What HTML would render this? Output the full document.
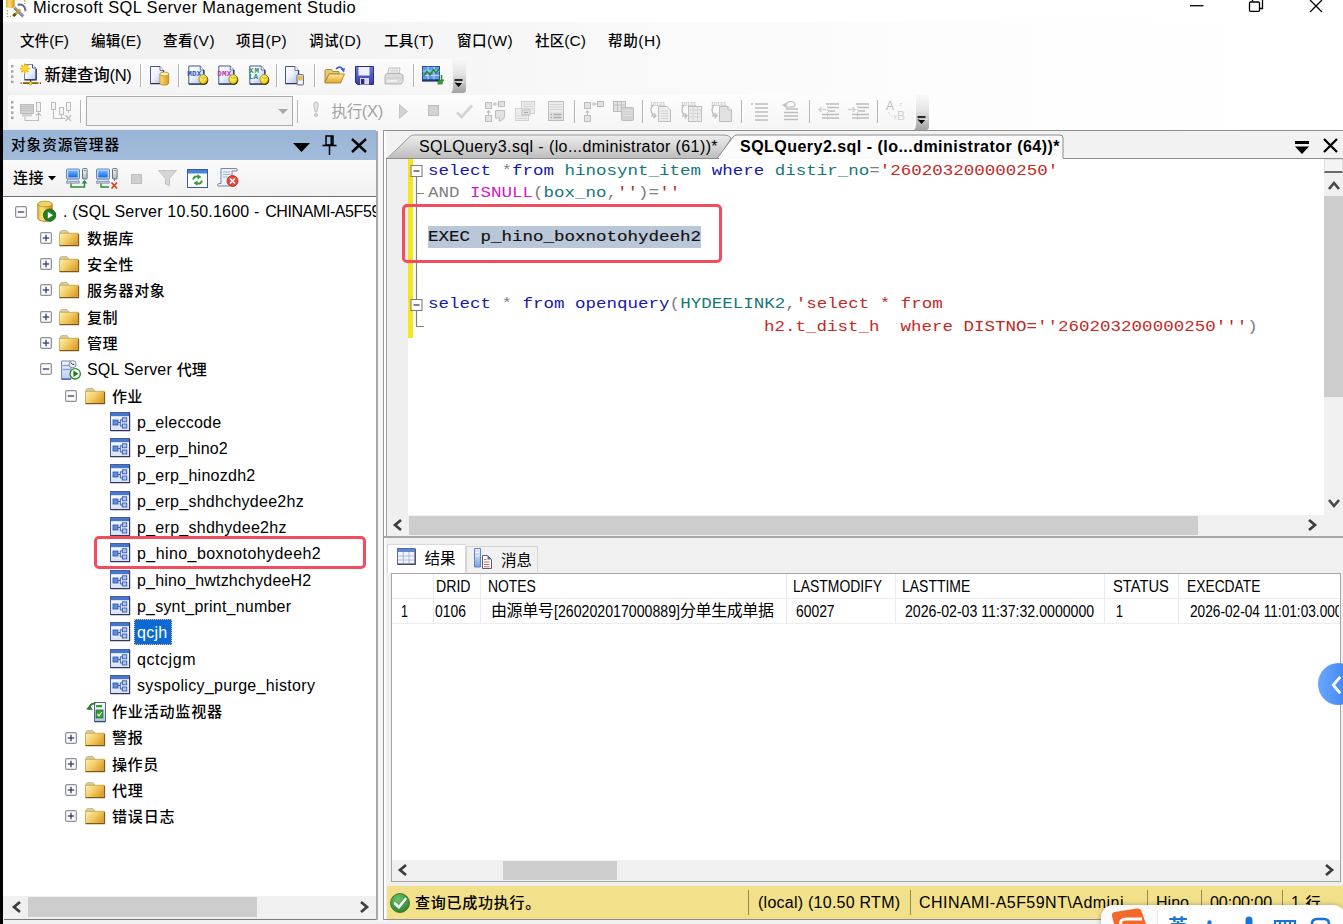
<!DOCTYPE html>
<html lang="zh-CN">
<head>
<meta charset="utf-8">
<title>Microsoft SQL Server Management Studio</title>
<style>
*{box-sizing:border-box;margin:0;padding:0}
html,body{width:1343px;height:924px;overflow:hidden;background:#f0f0f0}
body{position:relative;font-family:"Liberation Sans","Noto Sans CJK SC",sans-serif;color:#000;font-size:15px}
.abs{position:absolute}
.t{position:absolute;white-space:nowrap;line-height:1}
svg{position:absolute;overflow:visible}
.menu{font-size:15px;letter-spacing:-0.3px}
.row{font-size:16px;letter-spacing:-0.2px}
.code{font-family:"Liberation Mono",monospace;font-size:17.5px;white-space:pre}
.kw{color:#1616b0}.id{color:#157878}.fn{color:#d018c4}.st{color:#c4281e}.gr{color:#808080}.bk{color:#111;-webkit-text-stroke:.2px #111}
.grid{font-size:16.5px;transform-origin:0 50%;transform:scaleX(.86)}
.sb{font-size:16px;letter-spacing:-0.2px}
</style>
</head>
<body>
<div class="abs" style="left:0px;top:0px;width:1343px;height:22px;background:#ffffff;"></div>
<svg style="left:0px;top:0px" width="30" height="20" viewBox="0 0 30 20"><defs><linearGradient id="g1" x1="0" y1="0" x2="1" y2="0"><stop offset="0" stop-color="#e0a82a"/><stop offset=".35" stop-color="#fbe27c"/><stop offset="1" stop-color="#d8960e"/></linearGradient></defs><path d="M6 -2 V7 Q10.3 9.6 14.7 7 V-2 Z" fill="url(#g1)"/><path d="M7.4 10.2V16.4H11" stroke="#a8b030" stroke-width="1.3" stroke-dasharray="1.4 1.5" fill="none"/><path d="M24.7 0V4" stroke="#a8b030" stroke-width="1.2" stroke-dasharray="1.4 1.5"/><path d="M14.5 7.5L23.5 16.3" stroke="#8c9cb4" stroke-width="2.6"/><path d="M14.5 7.5L23.5 16.3" stroke="#39435c" stroke-width=".7" transform="translate(-.9,.9)"/><path d="M13.2 16L20.2 9.6" stroke="#c8a020" stroke-width="2.4"/><path d="M13.2 16L15.4 14" stroke="#5a4a10" stroke-width="2.6"/><path d="M17.6 4.8Q24.5 3.4 25.6 10.6" stroke="#5a6888" stroke-width="2" fill="none"/><path d="M23.8 9.4L26.8 9.4L25 12Z" fill="#7a88a8"/></svg>
<div class="t" style="left:33px;top:-1px;font-size:16.4px;letter-spacing:0.413px;font-weight:500;">Microsoft SQL Server Management Studio</div>
<svg style="left:1190px;top:0px" width="140" height="14" viewBox="0 0 140 14"><path d="M0 5.7H13.5" stroke="#000" stroke-width="1.3"/><rect x="59.5" y="2" width="10" height="9.3" rx="1" stroke="#000" stroke-width="1.3" fill="none"/><path d="M62.5 1.5V-1H72.5V8.5H70" stroke="#000" stroke-width="1.3" fill="none"/><path d="M120 0L132 12M132 0L120 12" stroke="#000" stroke-width="1.3"/></svg>
<div class="abs" style="left:0px;top:22px;width:1343px;height:109px;background:linear-gradient(90deg,#efefef 0,#f2f2f2 18%,#f8f8f8 42%,#fdfdfd 68%,#ffffff 100%);"></div>
<div class="t" style="left:20px;top:33px;font-size:15.5px;letter-spacing:0.013px;font-weight:500;"><span style="font-size:0.94em">文件</span>(F)</div>
<div class="t" style="left:91px;top:33px;font-size:15.5px;letter-spacing:0.138px;font-weight:500;"><span style="font-size:0.94em">编辑</span>(E)</div>
<div class="t" style="left:163px;top:33px;font-size:15.5px;letter-spacing:0.438px;font-weight:500;"><span style="font-size:0.94em">查看</span>(V)</div>
<div class="t" style="left:236px;top:33px;font-size:15.5px;letter-spacing:0.237px;font-weight:500;"><span style="font-size:0.94em">项目</span>(P)</div>
<div class="t" style="left:309px;top:33px;font-size:15.5px;letter-spacing:0.366px;font-weight:500;"><span style="font-size:0.94em">调试</span>(D)</div>
<div class="t" style="left:384px;top:33px;font-size:15.5px;letter-spacing:0.212px;font-weight:500;"><span style="font-size:0.94em">工具</span>(T)</div>
<div class="t" style="left:457px;top:33px;font-size:15.5px;letter-spacing:0.381px;font-weight:500;"><span style="font-size:0.94em">窗口</span>(W)</div>
<div class="t" style="left:535px;top:33px;font-size:15.5px;letter-spacing:0.066px;font-weight:500;"><span style="font-size:0.94em">社区</span>(C)</div>
<div class="t" style="left:608px;top:33px;font-size:15.5px;letter-spacing:0.566px;font-weight:500;"><span style="font-size:0.94em">帮助</span>(H)</div>
<div class="abs" style="left:8px;top:59px;width:444px;height:34px;background:linear-gradient(#fcfcfc,#f4f4f4);border-radius:3px"></div>
<svg style="left:11px;top:64.5px" width="3" height="24" viewBox="0 0 3 24"><rect x="0" y="0.0" width="2.5" height="2.5" fill="#a6a6a6"/><rect x="0" y="5.2" width="2.5" height="2.5" fill="#a6a6a6"/><rect x="0" y="10.4" width="2.5" height="2.5" fill="#a6a6a6"/><rect x="0" y="15.6" width="2.5" height="2.5" fill="#a6a6a6"/></svg>
<svg style="left:20px;top:63px" width="22" height="23" viewBox="0 0 22 23"><defs><linearGradient id="g2" x1="0" y1="0" x2="1" y2="1"><stop offset="0" stop-color="#ffffff"/><stop offset=".55" stop-color="#eef3fb"/><stop offset="1" stop-color="#b4c6e4"/></linearGradient></defs><path d="M4.5 1.5 H12.5 L16 5 V16.6 H4.5 Z" fill="url(#g2)" stroke="#6a7c9c" stroke-width=".9"/><path d="M12.5 1.5 V5 H16" fill="#fff" stroke="#3a4a6a" stroke-width=".9"/><path d="M4.5 16.8 H16.2 V6" stroke="#22304e" stroke-width="1.2" fill="none"/><path d="M10.6 17 V20" stroke="#4a3a10" stroke-width="1.3"/><path d="M0.5 20.2 H21" stroke="#8a5c08" stroke-width="1.7" stroke-dasharray="1.2 1.3 15.5 1.3 1.2 0"/><path d="M10.6 18.3 L12.6 20.3 L10.6 22.3 L8.6 20.3 Z" fill="#f6d21e" stroke="#8a5c08" stroke-width=".5"/><path d="M4.8 0.6 V10.6 M-0.2 5.6 H9.8 M1.3 2.1 L8.3 9.1 M8.3 2.1 L1.3 9.1" stroke="#f5b800" stroke-width="1.7"/><circle cx="4.8" cy="5.6" r="2.4" fill="#ffd83a"/></svg>
<div class="t" style="left:44.5px;top:66.5px;font-size:16.5px;letter-spacing:-0.272px;font-weight:500;">新建查询(N)</div>
<div class="abs" style="left:140px;top:64px;width:1px;height:23px;background:#b4b4b4"></div><div class="abs" style="left:141px;top:64px;width:1px;height:23px;background:#fdfdfd"></div>
<svg style="left:150px;top:66px" width="20" height="20" viewBox="0 0 20 20"><defs><linearGradient id="g3" x1="0" y1="0" x2="1" y2="1"><stop offset="0" stop-color="#ffffff"/><stop offset=".45" stop-color="#eef2fb"/><stop offset="1" stop-color="#a9bbe2"/></linearGradient></defs><path d="M0.5 0.5 H10 L13.5 4.5 V17.5 H0.5 Z" fill="url(#g3)" stroke="#46568a" stroke-width="1"/><path d="M10 0.5 V4.5 H13.5" fill="#fff" stroke="#46568a" stroke-width=".8"/><path d="M0.5 17.6 H13.6 V4.5" stroke="#27335a" stroke-width="1.1" fill="none"/><defs><linearGradient id="g4" x1="0" y1="0" x2="1" y2="0"><stop offset="0" stop-color="#fbe07a"/><stop offset="1" stop-color="#dd9a1e"/></linearGradient></defs><path d="M9.9 8 V17.2 A4.4 2 0 0 0 18.700000000000003 17.2 V8 Z" fill="url(#g4)" stroke="#a87a18" stroke-width=".7"/><ellipse cx="14.3" cy="8" rx="4.4" ry="2" fill="#fdf0b0" stroke="#a87a18" stroke-width=".7"/></svg>
<div class="abs" style="left:178px;top:64px;width:1px;height:23px;background:#b4b4b4"></div><div class="abs" style="left:179px;top:64px;width:1px;height:23px;background:#fdfdfd"></div>
<svg style="left:186px;top:65px" width="23" height="21" viewBox="0 0 23 21"><g transform="translate(2.3,0.5)"><defs><linearGradient id="g5" x1="0" y1="0" x2="1" y2="1"><stop offset="0" stop-color="#ffffff"/><stop offset=".45" stop-color="#eef2fb"/><stop offset="1" stop-color="#a9bbe2"/></linearGradient></defs><path d="M0.5 0.5 H12 L15.5 4.5 V18.5 H0.5 Z" fill="url(#g5)" stroke="#46568a" stroke-width="1"/><path d="M12 0.5 V4.5 H15.5" fill="#fff" stroke="#46568a" stroke-width=".8"/><path d="M0.5 18.6 H15.6 V4.5" stroke="#27335a" stroke-width="1.1" fill="none"/></g><text x="1.2" y="10.8" font-family="Liberation Mono,monospace" font-weight="bold" font-size="7.5" fill="#2a52b8" textLength="14">MDX</text><defs><radialGradient id="g6" cx=".4" cy=".35" r=".7"><stop offset="0" stop-color="#fff78a"/><stop offset="1" stop-color="#e6c000"/></radialGradient></defs><ellipse cx="17.9" cy="15.1" rx="4.4" ry="4.8" fill="#2a2208"/><ellipse cx="17.2" cy="14.3" rx="4.3" ry="4.7" fill="url(#g6)" stroke="#8a6a00" stroke-width=".6"/><path d="M15 12.6 Q17.2 13.8 19.4 12.6" stroke="#a88400" stroke-width=".7" fill="none"/></svg>
<svg style="left:216px;top:65px" width="23" height="21" viewBox="0 0 23 21"><g transform="translate(2.3,0.5)"><defs><linearGradient id="g7" x1="0" y1="0" x2="1" y2="1"><stop offset="0" stop-color="#ffffff"/><stop offset=".45" stop-color="#eef2fb"/><stop offset="1" stop-color="#a9bbe2"/></linearGradient></defs><path d="M0.5 0.5 H12 L15.5 4.5 V18.5 H0.5 Z" fill="url(#g7)" stroke="#46568a" stroke-width="1"/><path d="M12 0.5 V4.5 H15.5" fill="#fff" stroke="#46568a" stroke-width=".8"/><path d="M0.5 18.6 H15.6 V4.5" stroke="#27335a" stroke-width="1.1" fill="none"/></g><text x="1.2" y="10.8" font-family="Liberation Mono,monospace" font-weight="bold" font-size="7.5" fill="#b83ab8" textLength="14">DMX</text><defs><radialGradient id="g8" cx=".4" cy=".35" r=".7"><stop offset="0" stop-color="#fff78a"/><stop offset="1" stop-color="#e6c000"/></radialGradient></defs><ellipse cx="17.9" cy="15.1" rx="4.4" ry="4.8" fill="#2a2208"/><ellipse cx="17.2" cy="14.3" rx="4.3" ry="4.7" fill="url(#g8)" stroke="#8a6a00" stroke-width=".6"/><path d="M15 12.6 Q17.2 13.8 19.4 12.6" stroke="#a88400" stroke-width=".7" fill="none"/></svg>
<svg style="left:247px;top:65px" width="23" height="21" viewBox="0 0 23 21"><g transform="translate(2.3,0.5)"><defs><linearGradient id="g9" x1="0" y1="0" x2="1" y2="1"><stop offset="0" stop-color="#ffffff"/><stop offset=".45" stop-color="#eef2fb"/><stop offset="1" stop-color="#a9bbe2"/></linearGradient></defs><path d="M0.5 0.5 H12 L15.5 4.5 V18.5 H0.5 Z" fill="url(#g9)" stroke="#46568a" stroke-width="1"/><path d="M12 0.5 V4.5 H15.5" fill="#fff" stroke="#46568a" stroke-width=".8"/><path d="M0.5 18.6 H15.6 V4.5" stroke="#27335a" stroke-width="1.1" fill="none"/></g><text x="2" y="7.8" font-family="Liberation Mono,monospace" font-weight="bold" font-size="7.5" fill="#2f8a6a" textLength="10">XM</text><text x="2" y="14.3" font-family="Liberation Mono,monospace" font-weight="bold" font-size="7.5" fill="#2f8a6a" textLength="9">LA</text><defs><radialGradient id="g10" cx=".4" cy=".35" r=".7"><stop offset="0" stop-color="#fff78a"/><stop offset="1" stop-color="#e6c000"/></radialGradient></defs><ellipse cx="17.9" cy="15.1" rx="4.4" ry="4.8" fill="#2a2208"/><ellipse cx="17.2" cy="14.3" rx="4.3" ry="4.7" fill="url(#g10)" stroke="#8a6a00" stroke-width=".6"/><path d="M15 12.6 Q17.2 13.8 19.4 12.6" stroke="#a88400" stroke-width=".7" fill="none"/></svg>
<div class="abs" style="left:276px;top:64px;width:1px;height:23px;background:#b4b4b4"></div><div class="abs" style="left:277px;top:64px;width:1px;height:23px;background:#fdfdfd"></div>
<svg style="left:285px;top:66px" width="20" height="20" viewBox="0 0 20 20"><defs><linearGradient id="g11" x1="0" y1="0" x2="1" y2="1"><stop offset="0" stop-color="#ffffff"/><stop offset=".45" stop-color="#eef2fb"/><stop offset="1" stop-color="#a9bbe2"/></linearGradient></defs><path d="M0.5 0.5 H10 L13.5 4.5 V17.5 H0.5 Z" fill="url(#g11)" stroke="#46568a" stroke-width="1"/><path d="M10 0.5 V4.5 H13.5" fill="#fff" stroke="#46568a" stroke-width=".8"/><path d="M0.5 17.6 H13.6 V4.5" stroke="#27335a" stroke-width="1.1" fill="none"/><rect x="12" y="8.5" width="6.5" height="10.5" rx="1" fill="#d8d8e4" stroke="#666" stroke-width=".9"/><rect x="13.3" y="10" width="4" height="4" fill="#e8b84a"/><rect x="13.3" y="15" width="4" height="2.5" fill="#fff"/></svg>
<div class="abs" style="left:314px;top:64px;width:1px;height:23px;background:#b4b4b4"></div><div class="abs" style="left:315px;top:64px;width:1px;height:23px;background:#fdfdfd"></div>
<svg style="left:324px;top:66px" width="21" height="18" viewBox="0 0 21 18"><defs><linearGradient id="g12" x1="0" y1="0" x2="0" y2="1"><stop offset="0" stop-color="#fde9a0"/><stop offset="1" stop-color="#e2a62e"/></linearGradient></defs><path d="M1 5 Q1 3.5 2.5 3.5 H7.5 L9 5.5 H15 V8 H5 L1 16 Z" fill="#e8c870" stroke="#a8822a" stroke-width=".9"/><path d="M5 8 H20.5 L16.5 17 H0.8 Z" fill="url(#g12)" stroke="#a8822a" stroke-width=".9"/><path d="M12 3 Q16 -1 19 3.5" stroke="#3a62c8" stroke-width="1.6" fill="none"/><path d="M16.8 3.2 L21 2 L20 6.4 Z" fill="#3a62c8"/></svg>
<svg style="left:355px;top:66px" width="19" height="19" viewBox="0 0 19 19"><defs><linearGradient id="g13" x1="0" y1="0" x2="0" y2="1"><stop offset="0" stop-color="#6a78e0"/><stop offset="1" stop-color="#3a3aa8"/></linearGradient></defs><path d="M0.5 0.5 H18.5 V18.5 H2.5 L0.5 16.5 Z" fill="url(#g13)" stroke="#2a2a88" stroke-width="1"/><rect x="3.5" y="1" width="11" height="8.5" fill="#eef2ff"/><rect x="5" y="12" width="9" height="6.5" fill="#d8dcf0"/><rect x="6" y="13" width="3.3" height="5" fill="#2a2a88"/></svg>
<svg style="left:384px;top:67px" width="20" height="18" viewBox="0 0 20 18"><path d="M5 1 H16 L15 7 H3.5 Z" fill="#f2f2f2" stroke="#b8b8b8" stroke-width=".9"/><path d="M6 3.2 H14 M5.6 5 H14" stroke="#c8c8c8" stroke-width=".8"/><path d="M1 8 L3.5 6.5 H16 L19 8 V15 L17 17 H1 Z" fill="#dcdcdc" stroke="#b0b0b0" stroke-width=".9"/><path d="M1 11 H19" stroke="#c4c4c4" stroke-width=".8"/><rect x="3" y="13" width="10" height="2" fill="#efefef"/></svg>
<div class="abs" style="left:413px;top:64px;width:1px;height:23px;background:#b4b4b4"></div><div class="abs" style="left:414px;top:64px;width:1px;height:23px;background:#fdfdfd"></div>
<svg style="left:422px;top:66px" width="22" height="19" viewBox="0 0 22 19"><rect x="0.5" y="0.5" width="17" height="13" fill="#5e9ee8" stroke="#2a4a9a" stroke-width="1"/><path d="M0.5 5H17.5M0.5 9.5H17.5M6 .5V13.5M12 .5V13.5" stroke="#cfe4ff" stroke-width=".8"/><path d="M1.5 10 L5 5.5 L8 9 L11.5 3.5 L14 7 L17 3" stroke="#2f8a2f" stroke-width="1.5" fill="none"/><path d="M0 14.8H18" stroke="#1f2f6a" stroke-width="1.6"/><path d="M19.5 9 V16 M16.5 16 H21 M17 13.5 L19.5 16.5 L21.5 13.5" stroke="#2f8a2f" stroke-width="1.5" fill="none"/><rect x="15.5" y="15" width="5" height="3.5" fill="#3a9a3a"/></svg>
<svg style="left:451px;top:58px" width="15" height="35" viewBox="0 0 15 35"><defs><linearGradient id="g14" x1="0" y1="0" x2="0" y2="1"><stop offset="0" stop-color="#f9f9f9"/><stop offset=".45" stop-color="#e4e4e4"/><stop offset="1" stop-color="#a2a2a2"/></linearGradient></defs><path d="M2 0 H13 Q15 0 15 2 V32 Q15 35 12 35 H0 Q2 33 2 29 Z" fill="url(#g14)"/><path d="M3.5 22 H11.5" stroke="#000" stroke-width="1.6"/><path d="M3.5 24.5 H11.5 L7.5 29 Z" fill="#000"/><path d="M4.5 23.5 H12.5" stroke="#fff" stroke-width="1" opacity=".7" transform="translate(1,1)"/></svg>
<div class="abs" style="left:8px;top:95px;width:906px;height:34px;background:linear-gradient(#fdfdfd,#f5f5f5);border-radius:3px"></div>
<svg style="left:11px;top:100.5px" width="3" height="24" viewBox="0 0 3 24"><rect x="0" y="0.0" width="2.5" height="2.5" fill="#a6a6a6"/><rect x="0" y="5.2" width="2.5" height="2.5" fill="#a6a6a6"/><rect x="0" y="10.4" width="2.5" height="2.5" fill="#a6a6a6"/><rect x="0" y="15.6" width="2.5" height="2.5" fill="#a6a6a6"/></svg>
<svg style="left:20px;top:101px" width="22" height="21" viewBox="0 0 22 21"><rect x="0.5" y="3.5" width="13" height="9" fill="#d2d2d2" stroke="#bdbdbd"/><path d="M1 5.5H13M1 7.5H13M1 9.5H13" stroke="#bdbdbd" stroke-width=".8"/><rect x="2" y="13" width="10" height="2.5" fill="#d2d2d2"/><rect x="16.5" y="1.5" width="4" height="9" fill="#f4f4f4" stroke="#bdbdbd"/><path d="M5 15.5V19.5H18.5V12M16 14.5L18.5 12L21 14.5" stroke="#bdbdbd" stroke-width="1.1" fill="none"/></svg>
<svg style="left:50px;top:101px" width="22" height="21" viewBox="0 0 22 21"><rect x="1.5" y="1.5" width="4" height="7" fill="#f4f4f4" stroke="#bdbdbd"/><rect x="9.5" y="6.5" width="4" height="7" fill="#f4f4f4" stroke="#bdbdbd"/><rect x="16.5" y="1.5" width="4" height="8" fill="#f4f4f4" stroke="#bdbdbd"/><path d="M3.5 8.5V17.5H15M11.5 13.5V17.5M18.5 9.5V12" stroke="#bdbdbd" stroke-width="1.1" fill="none"/><path d="M15.5 14L21 20M21 14L15.5 20" stroke="#bdbdbd" stroke-width="1.3"/></svg>
<div class="abs" style="left:80px;top:100px;width:1px;height:23px;background:#b4b4b4"></div><div class="abs" style="left:81px;top:100px;width:1px;height:23px;background:#fdfdfd"></div>
<div class="abs" style="left:86px;top:96px;width:207px;height:30px;background:#f3f3f3;border:1px solid #ababab"></div>
<svg style="left:278px;top:109px" width="10" height="6" viewBox="0 0 10 6"><path d="M0 0H10L5 5Z" fill="#a8a8a8"/></svg>
<div class="abs" style="left:297px;top:100px;width:1px;height:23px;background:#b4b4b4"></div><div class="abs" style="left:298px;top:100px;width:1px;height:23px;background:#fdfdfd"></div>
<svg style="left:313px;top:101px" width="6" height="17" viewBox="0 0 6 17"><path d="M3 0.8 Q0.3 1 0.8 5 L2.2 11 H3.8 L5.2 5 Q5.7 1 3 0.8Z" fill="#e2e2e2" stroke="#bdbdbd" stroke-width=".9"/><circle cx="3" cy="14" r="1.6" fill="#d2d2d2" stroke="#bdbdbd" stroke-width=".8"/></svg>
<div class="t" style="left:331.5px;top:102.5px;font-size:16.5px;letter-spacing:-0.323px;font-weight:normal;color:#a2a2a2;"><span style="font-size:0.94em">执行</span>(X)</div>
<svg style="left:399px;top:104px" width="9" height="15" viewBox="0 0 9 15"><path d="M0.5 0.5 L8.5 7.5 L0.5 14.5 Z" fill="#d2d2d2" stroke="#bdbdbd" stroke-width=".8"/></svg>
<svg style="left:428px;top:105px" width="11" height="11" viewBox="0 0 11 11"><rect x="0.5" y="0.5" width="10" height="10" fill="#d2d2d2" stroke="#bdbdbd" stroke-width="1"/></svg>
<svg style="left:456px;top:104px" width="17" height="15" viewBox="0 0 17 15"><path d="M1 8.5 L5.5 13 L16 1.5" stroke="#d2d2d2" stroke-width="2.6" fill="none"/></svg>
<svg style="left:485px;top:101px" width="21" height="21" viewBox="0 0 21 21"><rect x="0.5" y="1.5" width="6" height="6" fill="#e2e2e2" stroke="#bdbdbd"/><rect x="13.5" y="0.5" width="6" height="5" fill="#e2e2e2" stroke="#bdbdbd"/><path d="M13 3H9M10.5 1.3L8.6 3L10.5 4.7" stroke="#bdbdbd" stroke-width="1.1" fill="none"/><rect x="0.5" y="14.5" width="6" height="6" fill="#e2e2e2" stroke="#bdbdbd"/><path d="M3.5 14V10M1.8 11.6L3.5 9.8L5.2 11.6" stroke="#bdbdbd" stroke-width="1.1" fill="none"/><path d="M10.5 9.5H19.5V15Q19.5 19 14 20L15 17H10.5Z" fill="#e2e2e2" stroke="#bdbdbd"/></svg>
<svg style="left:515px;top:101px" width="20" height="20" viewBox="0 0 20 20"><rect x="6.5" y="0.5" width="13" height="12" fill="#ececec" stroke="#d2d2d2"/><path d="M8 3H18M8 5.5H18M8 8H18" stroke="#d2d2d2" stroke-width=".9"/><rect x="0.5" y="7.5" width="13" height="12" fill="#ececec" stroke="#d2d2d2"/><path d="M2 15H12M2 17.5H12" stroke="#d2d2d2" stroke-width=".9"/><rect x="7" y="9" width="8" height="5" fill="#e2e2e2" stroke="#bdbdbd"/><path d="M9 11.5H13" stroke="#ababab" stroke-width="1.2"/></svg>
<svg style="left:548px;top:101px" width="16" height="20" viewBox="0 0 16 20"><rect x="0.5" y="0.5" width="15" height="19" fill="#ececec" stroke="#bdbdbd"/><path d="M2 3.5H14M2 6H14M2 8.5H14" stroke="#d2d2d2" stroke-width=".9"/><rect x="1" y="11" width="14" height="8" fill="#e2e2e2"/><path d="M2.5 13.5H4M5.5 13.5H13.5M2.5 16.5H4M5.5 16.5H13.5" stroke="#ababab" stroke-width="1.3"/></svg>
<div class="abs" style="left:574px;top:100px;width:1px;height:23px;background:#b4b4b4"></div><div class="abs" style="left:575px;top:100px;width:1px;height:23px;background:#fdfdfd"></div>
<svg style="left:584px;top:101px" width="21" height="21" viewBox="0 0 21 21"><rect x="0.5" y="1.5" width="6" height="6" fill="#e2e2e2" stroke="#bdbdbd"/><rect x="13.5" y="0.5" width="6" height="5" fill="#e2e2e2" stroke="#bdbdbd"/><path d="M13 3H9M10.5 1.3L8.6 3L10.5 4.7" stroke="#bdbdbd" stroke-width="1.1" fill="none"/><rect x="0.5" y="14.5" width="6" height="6" fill="#e2e2e2" stroke="#bdbdbd"/><path d="M3.5 14V10M1.8 11.6L3.5 9.8L5.2 11.6" stroke="#bdbdbd" stroke-width="1.1" fill="none"/></svg>
<svg style="left:613px;top:101px" width="21" height="20" viewBox="0 0 21 20"><rect x="0.5" y="0.5" width="12" height="10" fill="#e2e2e2" stroke="#bdbdbd"/><path d="M4.5 .5V10.5M8.5 .5V10.5M.5 4H12.5" stroke="#bdbdbd" stroke-width=".8"/><rect x="8.5" y="6.5" width="12" height="13" rx="1" fill="#d2d2d2" stroke="#bdbdbd"/><path d="M9.5 9.5H19.5M9.5 12H19.5M9.5 14.5H19.5" stroke="#e2e2e2" stroke-width=".9"/></svg>
<div class="abs" style="left:642px;top:100px;width:1px;height:23px;background:#b4b4b4"></div><div class="abs" style="left:643px;top:100px;width:1px;height:23px;background:#fdfdfd"></div>
<svg style="left:650px;top:101px" width="22" height="21" viewBox="0 0 22 21"><text x="0" y="5" font-family="Liberation Sans,sans-serif" font-size="5.5" fill="#ababab">10101</text><path d="M3 4 Q-1 9 3 14 M1 14.8H5.5M3.5 12.3L6 14.8L3.5 17.2" stroke="#bdbdbd" stroke-width="1.3" fill="none"/><path d="M8.5 5.5H17L20.5 9V20.5H8.5Z" fill="#ececec" stroke="#bdbdbd"/><path d="M10.5 10H18M10.5 12.5H18M10.5 15H18M10.5 17.5H18" stroke="#d2d2d2" stroke-width=".9"/></svg>
<svg style="left:681px;top:101px" width="22" height="21" viewBox="0 0 22 21"><text x="0" y="5" font-family="Liberation Sans,sans-serif" font-size="5.5" fill="#ababab">10101</text><path d="M3 4 Q-1 9 3 14 M1 14.8H5.5M3.5 12.3L6 14.8L3.5 17.2" stroke="#bdbdbd" stroke-width="1.3" fill="none"/><rect x="7.5" y="5.5" width="13" height="15" fill="#ececec" stroke="#bdbdbd"/><path d="M7.5 9H20.5M7.5 12.5H20.5M7.5 16H20.5M12 5.5V20.5M16.5 5.5V20.5" stroke="#d2d2d2" stroke-width=".9"/></svg>
<svg style="left:711px;top:101px" width="22" height="21" viewBox="0 0 22 21"><text x="0" y="5" font-family="Liberation Sans,sans-serif" font-size="5.5" fill="#ababab">10101</text><path d="M3 4 Q-1 9 3 14 M1 14.8H5.5M3.5 12.3L6 14.8L3.5 17.2" stroke="#bdbdbd" stroke-width="1.3" fill="none"/><path d="M8.5 5.5H17L20.5 9V20.5H8.5Z" fill="#e2e2e2" stroke="#bdbdbd"/><path d="M17 5.5V9H20.5" stroke="#bdbdbd" fill="#f4f4f4"/></svg>
<div class="abs" style="left:741px;top:100px;width:1px;height:23px;background:#b4b4b4"></div><div class="abs" style="left:742px;top:100px;width:1px;height:23px;background:#fdfdfd"></div>
<svg style="left:751px;top:103px" width="18" height="18" viewBox="0 0 18 18"><path d="M0 1H2M4 1H17M4 5H17M4 9H17M4 13H17M4 17H17" stroke="#bdbdbd" stroke-width="1.3"/></svg>
<svg style="left:782px;top:101px" width="17" height="20" viewBox="0 0 17 20"><path d="M5 3.5 Q5 0.5 9 0.5 Q13 0.5 13 3.5 Q13 6 9 6H4" stroke="#bdbdbd" stroke-width="1.2" fill="none"/><path d="M0 4L4.5 1.5V7Z" fill="#bdbdbd"/><path d="M4 8H16M2 11.5H16M2 15H16M2 18.5H16" stroke="#bdbdbd" stroke-width="1.3"/></svg>
<div class="abs" style="left:809px;top:100px;width:1px;height:23px;background:#b4b4b4"></div><div class="abs" style="left:810px;top:100px;width:1px;height:23px;background:#fdfdfd"></div>
<svg style="left:818px;top:103px" width="22" height="17" viewBox="0 0 22 17"><path d="M8 1H21M10 4.5H21M10 8H17M4 11.5H21M4 15H21" stroke="#bdbdbd" stroke-width="1.6"/><path d="M9.5 0V17" stroke="#bdbdbd" stroke-width=".8" stroke-dasharray="1.5 1.5"/><path d="M8 6.5H1M3.5 4L1 6.5L3.5 9" stroke="#d2d2d2" stroke-width="1.3" fill="none"/></svg>
<svg style="left:848px;top:103px" width="22" height="17" viewBox="0 0 22 17"><path d="M8 1H21M10 4.5H21M10 8H17M4 11.5H21M4 15H21" stroke="#bdbdbd" stroke-width="1.6"/><path d="M9.5 0V17" stroke="#bdbdbd" stroke-width=".8" stroke-dasharray="1.5 1.5"/><path d="M0 6.5H7M4.5 4L7 6.5L4.5 9" stroke="#d2d2d2" stroke-width="1.3" fill="none"/></svg>
<div class="abs" style="left:877px;top:100px;width:1px;height:23px;background:#b4b4b4"></div><div class="abs" style="left:878px;top:100px;width:1px;height:23px;background:#fdfdfd"></div>
<svg style="left:886px;top:100px" width="21" height="21" viewBox="0 0 21 21"><text x="0" y="10" font-family="Liberation Sans,sans-serif" font-size="12" fill="#bdbdbd">A</text><text x="11" y="20" font-family="Liberation Sans,sans-serif" font-size="12" fill="#d2d2d2">B</text><path d="M3 12 Q3 17 9 17" stroke="#d2d2d2" stroke-width="1" fill="none" stroke-dasharray="1.5 1.2"/><path d="M8 15L10.5 17L8 19" stroke="#d2d2d2" stroke-width="1" fill="none"/><text x="13" y="6" font-family="Liberation Sans,sans-serif" font-size="6" fill="#d2d2d2">z</text></svg>
<svg style="left:914px;top:95px" width="15" height="35" viewBox="0 0 15 35"><defs><linearGradient id="g15" x1="0" y1="0" x2="0" y2="1"><stop offset="0" stop-color="#f9f9f9"/><stop offset=".45" stop-color="#e4e4e4"/><stop offset="1" stop-color="#a2a2a2"/></linearGradient></defs><path d="M2 0 H13 Q15 0 15 2 V32 Q15 35 12 35 H0 Q2 33 2 29 Z" fill="url(#g15)"/><path d="M3.5 22 H11.5" stroke="#000" stroke-width="1.6"/><path d="M3.5 24.5 H11.5 L7.5 29 Z" fill="#000"/><path d="M4.5 23.5 H12.5" stroke="#fff" stroke-width="1" opacity=".7" transform="translate(1,1)"/></svg>
<div class="abs" style="left:3.4px;top:130.3px;width:372.6px;height:29.7px;background:linear-gradient(#98b4d6,#a2bcdb);"></div>
<div class="t" style="left:11px;top:137px;font-size:15.6px;letter-spacing:0.913px;font-weight:500;"><span style="font-size:0.94em">对象资源管理器</span></div>
<svg style="left:293px;top:143px" width="17" height="9" viewBox="0 0 17 9"><path d="M0 0H17L8.5 9Z" fill="#000"/></svg>
<svg style="left:322px;top:135px" width="15" height="21" viewBox="0 0 15 21"><path d="M4 1H11V10H4Z" fill="none" stroke="#000" stroke-width="1.5"/><path d="M9.5 1V10" stroke="#000" stroke-width="2"/><path d="M0.5 10.5H14.5" stroke="#000" stroke-width="1.6"/><path d="M7.5 10.5V20" stroke="#000" stroke-width="1.5"/></svg>
<svg style="left:351px;top:138px" width="16" height="15" viewBox="0 0 16 15"><path d="M1 1L15 14M15 1L1 14" stroke="#000" stroke-width="2.4"/></svg>
<div class="abs" style="left:4px;top:160px;width:373px;height:36px;background:linear-gradient(#fbfbfb,#f1f1f1);"></div>
<div class="abs" style="left:3.4px;top:195.5px;width:372.6px;height:1.4px;background:#6e6e6e;"></div>
<div class="t" style="left:13px;top:170px;font-size:16px;letter-spacing:0.461px;font-weight:500;"><span style="font-size:0.94em">连接</span></div>
<svg style="left:48px;top:176px" width="8" height="5" viewBox="0 0 8 5"><path d="M0 0H8L4 4.5Z" fill="#000"/></svg>
<svg style="left:66px;top:168px" width="22" height="21" viewBox="0 0 22 21"><defs><linearGradient id="g16" x1="0" y1="0" x2="0" y2="1"><stop offset="0" stop-color="#62b6ff"/><stop offset="1" stop-color="#1a66e0"/></linearGradient><linearGradient id="g17" x1="0" y1="0" x2="0" y2="1"><stop offset="0" stop-color="#ffffff"/><stop offset="1" stop-color="#aab4c6"/></linearGradient></defs><rect x="0.5" y="1" width="13" height="10" rx="1" fill="#c4d6f2" stroke="#5a7ab8" stroke-width=".9"/><rect x="2.3" y="2.8" width="9.4" height="6.6" fill="url(#g16)"/><rect x="1.5" y="11.3" width="11" height="2" fill="#dfe6f0" stroke="#7a8aa8" stroke-width=".6"/><rect x="0.3" y="13.3" width="13.4" height="2" fill="#b4c0d6" stroke="#7a8aa8" stroke-width=".5"/><rect x="16.5" y="0.5" width="4.6" height="10.5" rx=".8" fill="url(#g17)" stroke="#5a6478" stroke-width=".9"/><path d="M17.6 2.6H20" stroke="#5a6478" stroke-width=".8"/><path d="M5 15.5V19H18.5V13" stroke="#2f8a2f" stroke-width="1.4" fill="none"/><path d="M15.5 15.5L18.5 12L21.5 15.5Z" fill="#2f8a2f"/></svg>
<svg style="left:96px;top:168px" width="22" height="21" viewBox="0 0 22 21"><defs><linearGradient id="g18" x1="0" y1="0" x2="0" y2="1"><stop offset="0" stop-color="#62b6ff"/><stop offset="1" stop-color="#1a66e0"/></linearGradient><linearGradient id="g19" x1="0" y1="0" x2="0" y2="1"><stop offset="0" stop-color="#ffffff"/><stop offset="1" stop-color="#aab4c6"/></linearGradient></defs><rect x="0.5" y="1" width="13" height="10" rx="1" fill="#c4d6f2" stroke="#5a7ab8" stroke-width=".9"/><rect x="2.3" y="2.8" width="9.4" height="6.6" fill="url(#g18)"/><rect x="1.5" y="11.3" width="11" height="2" fill="#dfe6f0" stroke="#7a8aa8" stroke-width=".6"/><rect x="0.3" y="13.3" width="13.4" height="2" fill="#b4c0d6" stroke="#7a8aa8" stroke-width=".5"/><rect x="16.5" y="0.5" width="4.6" height="10.5" rx=".8" fill="url(#g19)" stroke="#5a6478" stroke-width=".9"/><path d="M17.6 2.6H20" stroke="#5a6478" stroke-width=".8"/><path d="M5 15.5V19H13" stroke="#2f8a2f" stroke-width="1.4" fill="none"/><path d="M18.5 11V13" stroke="#777" stroke-width="1"/><path d="M15.5 14.5L21 20.5M21 14.5L15.5 20.5" stroke="#e03a1a" stroke-width="1.7"/></svg>
<svg style="left:131px;top:173.5px" width="11" height="10" viewBox="0 0 11 10"><rect x="0.5" y="0.5" width="10" height="9" fill="#cfcfcf" stroke="#bdbdbd"/></svg>
<svg style="left:158px;top:170px" width="19" height="16" viewBox="0 0 19 16"><path d="M0.5 0.5H18.5L11.5 8.5V15.5L7.5 14V8.5Z" fill="#d6d6d6" stroke="#bdbdbd" stroke-width=".9"/></svg>
<svg style="left:187px;top:169px" width="21" height="19" viewBox="0 0 21 19"><rect x="0.5" y="0.5" width="20" height="18" fill="#fff" stroke="#3a5aa8"/><rect x="1" y="1" width="19" height="3.5" fill="#4a82d8"/><path d="M6 10.5 Q7 6.5 11.5 7.5" stroke="#2f9a2f" stroke-width="1.8" fill="none"/><path d="M10.5 5.2L14.5 8L10.5 10.4Z" fill="#2f9a2f"/><path d="M15 11.5 Q14 15.5 9.5 14.5" stroke="#2f9a2f" stroke-width="1.8" fill="none"/><path d="M10.5 16.8L6.5 14L10.5 11.6Z" fill="#2f9a2f"/></svg>
<svg style="left:217px;top:167px" width="22" height="21" viewBox="0 0 22 21"><path d="M4 1.5H19Q21 1.5 20 4H15V16Q15 19 12 19H1Q-0.5 16.5 3 16.5H4Z" fill="#eef2f8" stroke="#6a7a9a" stroke-width=".9"/><path d="M6 5H13M6 7.5H13M6 10H11" stroke="#9aa6c0" stroke-width=".9"/><circle cx="15.5" cy="14" r="5.5" fill="#e8453a" stroke="#b02a20" stroke-width=".8"/><path d="M13 11.5L18 16.5M18 11.5L13 16.5" stroke="#fff" stroke-width="1.7"/></svg>
<div class="abs" style="left:3.4px;top:196.9px;width:372.6px;height:699.1px;background:#ffffff;"></div>
<div class="abs" style="left:4px;top:196px;width:371.5px;height:700px;overflow:hidden">
<svg style="left:10.5px;top:10px" width="12" height="12" viewBox="0 0 12 12"><rect x="0.6" y="0.6" width="10.8" height="10.8" rx="1.3" fill="#fcfcfc" stroke="#909096" stroke-width="1.2"/><path d="M2.8 6H9.2" stroke="#2a3766" stroke-width="1.25"/></svg>
<svg style="left:33px;top:4px" width="19" height="22" viewBox="0 0 19 22"><defs><linearGradient id="g20" x1="0" y1="0" x2="1" y2="0"><stop offset="0" stop-color="#e9b83a"/><stop offset=".3" stop-color="#fbe27c"/><stop offset="1" stop-color="#c98c1a"/></linearGradient></defs><path d="M0.8 4 V18.5 A7.2 2.8 0 0 0 15.2 18.5 V4 Z" fill="url(#g20)" stroke="#a87a18" stroke-width=".8"/><ellipse cx="8" cy="4" rx="7.2" ry="2.8" fill="#f3d66a" stroke="#b08a20" stroke-width=".8"/><circle cx="12.6" cy="15.2" r="6.2" fill="#237f23" stroke="#176017" stroke-width=".8"/><path d="M10.8 11.8 L16 15.2 L10.8 18.6 Z" fill="#fff"/></svg>
<div class="t" style="left:59px;top:8px;font-size:16px;letter-spacing:0.192px">. (SQL Server 10.50.1600 -</div><div class="t" style="left:261.2px;top:8px;font-size:16px;letter-spacing:-0.402px">CHINAMI-A5F59NT\Administrator)</div>
<svg style="left:35.5px;top:36px" width="12" height="12" viewBox="0 0 12 12"><rect x="0.6" y="0.6" width="10.8" height="10.8" rx="1.3" fill="#fcfcfc" stroke="#909096" stroke-width="1.2"/><path d="M2.8 6H9.2" stroke="#2a3766" stroke-width="1.25"/><path d="M6 2.8V9.2" stroke="#2a3766" stroke-width="1.25"/></svg>
<svg style="left:55px;top:34px" width="20" height="16" viewBox="0 0 20 16"><defs><linearGradient id="g21" x1="0" y1="0" x2="1" y2=".6"><stop offset="0" stop-color="#fdf0b4"/><stop offset=".5" stop-color="#f3cf6a"/><stop offset="1" stop-color="#dea02e"/></linearGradient></defs><path d="M0.8 3.5 Q0.8 0.6 3 0.6 L8 0.6 L10 3.4 L0.8 3.4 Z" fill="#d9d2a4" stroke="#b7ad7c" stroke-width=".8"/><rect x="0.6" y="3.2" width="18.6" height="12.2" fill="url(#g21)" stroke="#c4a048" stroke-width=".8"/><path d="M0.6 15.6 H19.6 V4" stroke="#6a4a10" stroke-width="1.1" fill="none" opacity=".85"/></svg>
<div class="t" style="left:83px;top:35px;font-size:16px;letter-spacing:0.664px;font-weight:500;"><span style="font-size:0.94em">数据库</span></div>
<svg style="left:35.5px;top:62px" width="12" height="12" viewBox="0 0 12 12"><rect x="0.6" y="0.6" width="10.8" height="10.8" rx="1.3" fill="#fcfcfc" stroke="#909096" stroke-width="1.2"/><path d="M2.8 6H9.2" stroke="#2a3766" stroke-width="1.25"/><path d="M6 2.8V9.2" stroke="#2a3766" stroke-width="1.25"/></svg>
<svg style="left:55px;top:60px" width="20" height="16" viewBox="0 0 20 16"><defs><linearGradient id="g22" x1="0" y1="0" x2="1" y2=".6"><stop offset="0" stop-color="#fdf0b4"/><stop offset=".5" stop-color="#f3cf6a"/><stop offset="1" stop-color="#dea02e"/></linearGradient></defs><path d="M0.8 3.5 Q0.8 0.6 3 0.6 L8 0.6 L10 3.4 L0.8 3.4 Z" fill="#d9d2a4" stroke="#b7ad7c" stroke-width=".8"/><rect x="0.6" y="3.2" width="18.6" height="12.2" fill="url(#g22)" stroke="#c4a048" stroke-width=".8"/><path d="M0.6 15.6 H19.6 V4" stroke="#6a4a10" stroke-width="1.1" fill="none" opacity=".85"/></svg>
<div class="t" style="left:83px;top:61px;font-size:16px;letter-spacing:0.664px;font-weight:500;"><span style="font-size:0.94em">安全性</span></div>
<svg style="left:35.5px;top:88px" width="12" height="12" viewBox="0 0 12 12"><rect x="0.6" y="0.6" width="10.8" height="10.8" rx="1.3" fill="#fcfcfc" stroke="#909096" stroke-width="1.2"/><path d="M2.8 6H9.2" stroke="#2a3766" stroke-width="1.25"/><path d="M6 2.8V9.2" stroke="#2a3766" stroke-width="1.25"/></svg>
<svg style="left:55px;top:86px" width="20" height="16" viewBox="0 0 20 16"><defs><linearGradient id="g23" x1="0" y1="0" x2="1" y2=".6"><stop offset="0" stop-color="#fdf0b4"/><stop offset=".5" stop-color="#f3cf6a"/><stop offset="1" stop-color="#dea02e"/></linearGradient></defs><path d="M0.8 3.5 Q0.8 0.6 3 0.6 L8 0.6 L10 3.4 L0.8 3.4 Z" fill="#d9d2a4" stroke="#b7ad7c" stroke-width=".8"/><rect x="0.6" y="3.2" width="18.6" height="12.2" fill="url(#g23)" stroke="#c4a048" stroke-width=".8"/><path d="M0.6 15.6 H19.6 V4" stroke="#6a4a10" stroke-width="1.1" fill="none" opacity=".85"/></svg>
<div class="t" style="left:83px;top:87px;font-size:16px;letter-spacing:0.686px;font-weight:500;"><span style="font-size:0.94em">服务器对象</span></div>
<svg style="left:35.5px;top:115px" width="12" height="12" viewBox="0 0 12 12"><rect x="0.6" y="0.6" width="10.8" height="10.8" rx="1.3" fill="#fcfcfc" stroke="#909096" stroke-width="1.2"/><path d="M2.8 6H9.2" stroke="#2a3766" stroke-width="1.25"/><path d="M6 2.8V9.2" stroke="#2a3766" stroke-width="1.25"/></svg>
<svg style="left:55px;top:113px" width="20" height="16" viewBox="0 0 20 16"><defs><linearGradient id="g24" x1="0" y1="0" x2="1" y2=".6"><stop offset="0" stop-color="#fdf0b4"/><stop offset=".5" stop-color="#f3cf6a"/><stop offset="1" stop-color="#dea02e"/></linearGradient></defs><path d="M0.8 3.5 Q0.8 0.6 3 0.6 L8 0.6 L10 3.4 L0.8 3.4 Z" fill="#d9d2a4" stroke="#b7ad7c" stroke-width=".8"/><rect x="0.6" y="3.2" width="18.6" height="12.2" fill="url(#g24)" stroke="#c4a048" stroke-width=".8"/><path d="M0.6 15.6 H19.6 V4" stroke="#6a4a10" stroke-width="1.1" fill="none" opacity=".85"/></svg>
<div class="t" style="left:83px;top:114px;font-size:16px;letter-spacing:0.361px;font-weight:500;"><span style="font-size:0.94em">复制</span></div>
<svg style="left:35.5px;top:141px" width="12" height="12" viewBox="0 0 12 12"><rect x="0.6" y="0.6" width="10.8" height="10.8" rx="1.3" fill="#fcfcfc" stroke="#909096" stroke-width="1.2"/><path d="M2.8 6H9.2" stroke="#2a3766" stroke-width="1.25"/><path d="M6 2.8V9.2" stroke="#2a3766" stroke-width="1.25"/></svg>
<svg style="left:55px;top:139px" width="20" height="16" viewBox="0 0 20 16"><defs><linearGradient id="g25" x1="0" y1="0" x2="1" y2=".6"><stop offset="0" stop-color="#fdf0b4"/><stop offset=".5" stop-color="#f3cf6a"/><stop offset="1" stop-color="#dea02e"/></linearGradient></defs><path d="M0.8 3.5 Q0.8 0.6 3 0.6 L8 0.6 L10 3.4 L0.8 3.4 Z" fill="#d9d2a4" stroke="#b7ad7c" stroke-width=".8"/><rect x="0.6" y="3.2" width="18.6" height="12.2" fill="url(#g25)" stroke="#c4a048" stroke-width=".8"/><path d="M0.6 15.6 H19.6 V4" stroke="#6a4a10" stroke-width="1.1" fill="none" opacity=".85"/></svg>
<div class="t" style="left:83px;top:140px;font-size:16px;letter-spacing:0.361px;font-weight:500;"><span style="font-size:0.94em">管理</span></div>
<svg style="left:35.5px;top:167px" width="12" height="12" viewBox="0 0 12 12"><rect x="0.6" y="0.6" width="10.8" height="10.8" rx="1.3" fill="#fcfcfc" stroke="#909096" stroke-width="1.2"/><path d="M2.8 6H9.2" stroke="#2a3766" stroke-width="1.25"/></svg>
<svg style="left:57px;top:164px" width="20" height="20" viewBox="0 0 20 20"><defs><linearGradient id="g26" x1="0" y1="0" x2="0" y2="1"><stop offset="0" stop-color="#f6f9ff"/><stop offset="1" stop-color="#b9cdf0"/></linearGradient></defs><path d="M0.6 1 H10 V19 H0.6 Z" fill="url(#g26)" stroke="#6a82b4" stroke-width="1"/><path d="M1.5 5.5H9M1.5 9.5H9" stroke="#8aa4d8" stroke-width="1.4"/><path d="M0.6 19.2H10" stroke="#3a5a9a" stroke-width="1.2"/><circle cx="11.6" cy="4.2" r="3.6" fill="#eef2fa" stroke="#707a90" stroke-width=".9"/><path d="M11.6 4.4L9.8 2.6M11.6 4.4H13.2" stroke="#222" stroke-width="1" fill="none"/><circle cx="14.2" cy="13.8" r="5.2" fill="#f4fff2" stroke="#2a8a2a" stroke-width="1.3"/><path d="M12.4 10.6 L17.4 13.8 L12.4 17 Z" fill="#1f7a1f"/></svg>
<div class="t" style="left:83px;top:166px;font-size:16px;letter-spacing:0.199px;font-weight:500;">SQL Server <span style="font-size:0.94em">代理</span></div>
<svg style="left:61px;top:194px" width="12" height="12" viewBox="0 0 12 12"><rect x="0.6" y="0.6" width="10.8" height="10.8" rx="1.3" fill="#fcfcfc" stroke="#909096" stroke-width="1.2"/><path d="M2.8 6H9.2" stroke="#2a3766" stroke-width="1.25"/></svg>
<svg style="left:80.5px;top:192px" width="20" height="16" viewBox="0 0 20 16"><defs><linearGradient id="g27" x1="0" y1="0" x2="1" y2=".6"><stop offset="0" stop-color="#fdf0b4"/><stop offset=".5" stop-color="#f3cf6a"/><stop offset="1" stop-color="#dea02e"/></linearGradient></defs><path d="M0.8 3.5 Q0.8 0.6 3 0.6 L8 0.6 L10 3.4 L0.8 3.4 Z" fill="#d9d2a4" stroke="#b7ad7c" stroke-width=".8"/><rect x="0.6" y="3.2" width="18.6" height="12.2" fill="url(#g27)" stroke="#c4a048" stroke-width=".8"/><path d="M0.6 15.6 H19.6 V4" stroke="#6a4a10" stroke-width="1.1" fill="none" opacity=".85"/></svg>
<div class="t" style="left:108px;top:193px;font-size:16px;letter-spacing:0.211px;font-weight:500;"><span style="font-size:0.94em">作业</span></div>
<svg style="left:106px;top:216px" width="20" height="19" viewBox="0 0 20 19"><defs><linearGradient id="g28" x1="0" y1="0" x2="0" y2="1"><stop offset="0" stop-color="#ffffff"/><stop offset="1" stop-color="#d6e2f8"/></linearGradient></defs><rect x="0.5" y="0.5" width="19" height="18" fill="url(#g28)" stroke="#4a5c9c" stroke-width="1"/><rect x="1" y="1" width="18" height="3.2" fill="#4677cf"/><path d="M0.6 18.6H19.6V1" stroke="#34375a" stroke-width="1.2" fill="none"/><rect x="3" y="8" width="5" height="5" fill="#5f8fe0" stroke="#2d4fa0" stroke-width=".8"/><rect x="12.3" y="5.8" width="4.5" height="4" fill="#a9c6f6" stroke="#2d4fa0" stroke-width=".8"/><rect x="12.3" y="12" width="4.5" height="4" fill="#a9c6f6" stroke="#2d4fa0" stroke-width=".8"/><path d="M8 10.5H10.3M10.3 7.8V14M10.3 7.8H12.3M10.3 14H12.3" stroke="#2d4fa0" stroke-width=".9" fill="none"/></svg>
<div class="t" style="left:133px;top:219px;font-size:16px;letter-spacing:0.256px;font-weight:500;">p_eleccode</div>
<svg style="left:106px;top:242px" width="20" height="19" viewBox="0 0 20 19"><defs><linearGradient id="g29" x1="0" y1="0" x2="0" y2="1"><stop offset="0" stop-color="#ffffff"/><stop offset="1" stop-color="#d6e2f8"/></linearGradient></defs><rect x="0.5" y="0.5" width="19" height="18" fill="url(#g29)" stroke="#4a5c9c" stroke-width="1"/><rect x="1" y="1" width="18" height="3.2" fill="#4677cf"/><path d="M0.6 18.6H19.6V1" stroke="#34375a" stroke-width="1.2" fill="none"/><rect x="3" y="8" width="5" height="5" fill="#5f8fe0" stroke="#2d4fa0" stroke-width=".8"/><rect x="12.3" y="5.8" width="4.5" height="4" fill="#a9c6f6" stroke="#2d4fa0" stroke-width=".8"/><rect x="12.3" y="12" width="4.5" height="4" fill="#a9c6f6" stroke="#2d4fa0" stroke-width=".8"/><path d="M8 10.5H10.3M10.3 7.8V14M10.3 7.8H12.3M10.3 14H12.3" stroke="#2d4fa0" stroke-width=".9" fill="none"/></svg>
<div class="t" style="left:133px;top:245px;font-size:16px;letter-spacing:0.176px;font-weight:500;">p_erp_hino2</div>
<svg style="left:106px;top:268px" width="20" height="19" viewBox="0 0 20 19"><defs><linearGradient id="g30" x1="0" y1="0" x2="0" y2="1"><stop offset="0" stop-color="#ffffff"/><stop offset="1" stop-color="#d6e2f8"/></linearGradient></defs><rect x="0.5" y="0.5" width="19" height="18" fill="url(#g30)" stroke="#4a5c9c" stroke-width="1"/><rect x="1" y="1" width="18" height="3.2" fill="#4677cf"/><path d="M0.6 18.6H19.6V1" stroke="#34375a" stroke-width="1.2" fill="none"/><rect x="3" y="8" width="5" height="5" fill="#5f8fe0" stroke="#2d4fa0" stroke-width=".8"/><rect x="12.3" y="5.8" width="4.5" height="4" fill="#a9c6f6" stroke="#2d4fa0" stroke-width=".8"/><rect x="12.3" y="12" width="4.5" height="4" fill="#a9c6f6" stroke="#2d4fa0" stroke-width=".8"/><path d="M8 10.5H10.3M10.3 7.8V14M10.3 7.8H12.3M10.3 14H12.3" stroke="#2d4fa0" stroke-width=".9" fill="none"/></svg>
<div class="t" style="left:133px;top:272px;font-size:16px;letter-spacing:0.267px;font-weight:500;">p_erp_hinozdh2</div>
<svg style="left:106px;top:295px" width="20" height="19" viewBox="0 0 20 19"><defs><linearGradient id="g31" x1="0" y1="0" x2="0" y2="1"><stop offset="0" stop-color="#ffffff"/><stop offset="1" stop-color="#d6e2f8"/></linearGradient></defs><rect x="0.5" y="0.5" width="19" height="18" fill="url(#g31)" stroke="#4a5c9c" stroke-width="1"/><rect x="1" y="1" width="18" height="3.2" fill="#4677cf"/><path d="M0.6 18.6H19.6V1" stroke="#34375a" stroke-width="1.2" fill="none"/><rect x="3" y="8" width="5" height="5" fill="#5f8fe0" stroke="#2d4fa0" stroke-width=".8"/><rect x="12.3" y="5.8" width="4.5" height="4" fill="#a9c6f6" stroke="#2d4fa0" stroke-width=".8"/><rect x="12.3" y="12" width="4.5" height="4" fill="#a9c6f6" stroke="#2d4fa0" stroke-width=".8"/><path d="M8 10.5H10.3M10.3 7.8V14M10.3 7.8H12.3M10.3 14H12.3" stroke="#2d4fa0" stroke-width=".9" fill="none"/></svg>
<div class="t" style="left:133px;top:298px;font-size:16px;letter-spacing:0.263px;font-weight:500;">p_erp_shdhchydee2hz</div>
<svg style="left:106px;top:321px" width="20" height="19" viewBox="0 0 20 19"><defs><linearGradient id="g32" x1="0" y1="0" x2="0" y2="1"><stop offset="0" stop-color="#ffffff"/><stop offset="1" stop-color="#d6e2f8"/></linearGradient></defs><rect x="0.5" y="0.5" width="19" height="18" fill="url(#g32)" stroke="#4a5c9c" stroke-width="1"/><rect x="1" y="1" width="18" height="3.2" fill="#4677cf"/><path d="M0.6 18.6H19.6V1" stroke="#34375a" stroke-width="1.2" fill="none"/><rect x="3" y="8" width="5" height="5" fill="#5f8fe0" stroke="#2d4fa0" stroke-width=".8"/><rect x="12.3" y="5.8" width="4.5" height="4" fill="#a9c6f6" stroke="#2d4fa0" stroke-width=".8"/><rect x="12.3" y="12" width="4.5" height="4" fill="#a9c6f6" stroke="#2d4fa0" stroke-width=".8"/><path d="M8 10.5H10.3M10.3 7.8V14M10.3 7.8H12.3M10.3 14H12.3" stroke="#2d4fa0" stroke-width=".9" fill="none"/></svg>
<div class="t" style="left:133px;top:324px;font-size:16px;letter-spacing:0.276px;font-weight:500;">p_erp_shdhydee2hz</div>
<svg style="left:106px;top:347px" width="20" height="19" viewBox="0 0 20 19"><defs><linearGradient id="g33" x1="0" y1="0" x2="0" y2="1"><stop offset="0" stop-color="#ffffff"/><stop offset="1" stop-color="#d6e2f8"/></linearGradient></defs><rect x="0.5" y="0.5" width="19" height="18" fill="url(#g33)" stroke="#4a5c9c" stroke-width="1"/><rect x="1" y="1" width="18" height="3.2" fill="#4677cf"/><path d="M0.6 18.6H19.6V1" stroke="#34375a" stroke-width="1.2" fill="none"/><rect x="3" y="8" width="5" height="5" fill="#5f8fe0" stroke="#2d4fa0" stroke-width=".8"/><rect x="12.3" y="5.8" width="4.5" height="4" fill="#a9c6f6" stroke="#2d4fa0" stroke-width=".8"/><rect x="12.3" y="12" width="4.5" height="4" fill="#a9c6f6" stroke="#2d4fa0" stroke-width=".8"/><path d="M8 10.5H10.3M10.3 7.8V14M10.3 7.8H12.3M10.3 14H12.3" stroke="#2d4fa0" stroke-width=".9" fill="none"/></svg>
<div class="t" style="left:133px;top:350px;font-size:16px;letter-spacing:0.420px;font-weight:500;">p_hino_boxnotohydeeh2</div>
<svg style="left:106px;top:374px" width="20" height="19" viewBox="0 0 20 19"><defs><linearGradient id="g34" x1="0" y1="0" x2="0" y2="1"><stop offset="0" stop-color="#ffffff"/><stop offset="1" stop-color="#d6e2f8"/></linearGradient></defs><rect x="0.5" y="0.5" width="19" height="18" fill="url(#g34)" stroke="#4a5c9c" stroke-width="1"/><rect x="1" y="1" width="18" height="3.2" fill="#4677cf"/><path d="M0.6 18.6H19.6V1" stroke="#34375a" stroke-width="1.2" fill="none"/><rect x="3" y="8" width="5" height="5" fill="#5f8fe0" stroke="#2d4fa0" stroke-width=".8"/><rect x="12.3" y="5.8" width="4.5" height="4" fill="#a9c6f6" stroke="#2d4fa0" stroke-width=".8"/><rect x="12.3" y="12" width="4.5" height="4" fill="#a9c6f6" stroke="#2d4fa0" stroke-width=".8"/><path d="M8 10.5H10.3M10.3 7.8V14M10.3 7.8H12.3M10.3 14H12.3" stroke="#2d4fa0" stroke-width=".9" fill="none"/></svg>
<div class="t" style="left:133px;top:377px;font-size:16px;letter-spacing:0.180px;font-weight:500;">p_hino_hwtzhchydeeH2</div>
<svg style="left:106px;top:400px" width="20" height="19" viewBox="0 0 20 19"><defs><linearGradient id="g35" x1="0" y1="0" x2="0" y2="1"><stop offset="0" stop-color="#ffffff"/><stop offset="1" stop-color="#d6e2f8"/></linearGradient></defs><rect x="0.5" y="0.5" width="19" height="18" fill="url(#g35)" stroke="#4a5c9c" stroke-width="1"/><rect x="1" y="1" width="18" height="3.2" fill="#4677cf"/><path d="M0.6 18.6H19.6V1" stroke="#34375a" stroke-width="1.2" fill="none"/><rect x="3" y="8" width="5" height="5" fill="#5f8fe0" stroke="#2d4fa0" stroke-width=".8"/><rect x="12.3" y="5.8" width="4.5" height="4" fill="#a9c6f6" stroke="#2d4fa0" stroke-width=".8"/><rect x="12.3" y="12" width="4.5" height="4" fill="#a9c6f6" stroke="#2d4fa0" stroke-width=".8"/><path d="M8 10.5H10.3M10.3 7.8V14M10.3 7.8H12.3M10.3 14H12.3" stroke="#2d4fa0" stroke-width=".9" fill="none"/></svg>
<div class="t" style="left:133px;top:403px;font-size:16px;letter-spacing:0.205px;font-weight:500;">p_synt_print_number</div>
<svg style="left:106px;top:426px" width="20" height="19" viewBox="0 0 20 19"><defs><linearGradient id="g36" x1="0" y1="0" x2="0" y2="1"><stop offset="0" stop-color="#ffffff"/><stop offset="1" stop-color="#d6e2f8"/></linearGradient></defs><rect x="0.5" y="0.5" width="19" height="18" fill="url(#g36)" stroke="#4a5c9c" stroke-width="1"/><rect x="1" y="1" width="18" height="3.2" fill="#4677cf"/><path d="M0.6 18.6H19.6V1" stroke="#34375a" stroke-width="1.2" fill="none"/><rect x="3" y="8" width="5" height="5" fill="#5f8fe0" stroke="#2d4fa0" stroke-width=".8"/><rect x="12.3" y="5.8" width="4.5" height="4" fill="#a9c6f6" stroke="#2d4fa0" stroke-width=".8"/><rect x="12.3" y="12" width="4.5" height="4" fill="#a9c6f6" stroke="#2d4fa0" stroke-width=".8"/><path d="M8 10.5H10.3M10.3 7.8V14M10.3 7.8H12.3M10.3 14H12.3" stroke="#2d4fa0" stroke-width=".9" fill="none"/></svg>
<div class="abs" style="left:130px;top:423px;width:38px;height:26px;background:#0c6ad2;outline:1px dotted #f0c080;outline-offset:-1px"></div>
<div class="t" style="left:133px;top:429px;font-size:16px;letter-spacing:0.285px;font-weight:500;color:#fff;">qcjh</div>
<svg style="left:106px;top:453px" width="20" height="19" viewBox="0 0 20 19"><defs><linearGradient id="g37" x1="0" y1="0" x2="0" y2="1"><stop offset="0" stop-color="#ffffff"/><stop offset="1" stop-color="#d6e2f8"/></linearGradient></defs><rect x="0.5" y="0.5" width="19" height="18" fill="url(#g37)" stroke="#4a5c9c" stroke-width="1"/><rect x="1" y="1" width="18" height="3.2" fill="#4677cf"/><path d="M0.6 18.6H19.6V1" stroke="#34375a" stroke-width="1.2" fill="none"/><rect x="3" y="8" width="5" height="5" fill="#5f8fe0" stroke="#2d4fa0" stroke-width=".8"/><rect x="12.3" y="5.8" width="4.5" height="4" fill="#a9c6f6" stroke="#2d4fa0" stroke-width=".8"/><rect x="12.3" y="12" width="4.5" height="4" fill="#a9c6f6" stroke="#2d4fa0" stroke-width=".8"/><path d="M8 10.5H10.3M10.3 7.8V14M10.3 7.8H12.3M10.3 14H12.3" stroke="#2d4fa0" stroke-width=".9" fill="none"/></svg>
<div class="t" style="left:133px;top:456px;font-size:16px;letter-spacing:0.568px;font-weight:500;">qctcjgm</div>
<svg style="left:106px;top:479px" width="20" height="19" viewBox="0 0 20 19"><defs><linearGradient id="g38" x1="0" y1="0" x2="0" y2="1"><stop offset="0" stop-color="#ffffff"/><stop offset="1" stop-color="#d6e2f8"/></linearGradient></defs><rect x="0.5" y="0.5" width="19" height="18" fill="url(#g38)" stroke="#4a5c9c" stroke-width="1"/><rect x="1" y="1" width="18" height="3.2" fill="#4677cf"/><path d="M0.6 18.6H19.6V1" stroke="#34375a" stroke-width="1.2" fill="none"/><rect x="3" y="8" width="5" height="5" fill="#5f8fe0" stroke="#2d4fa0" stroke-width=".8"/><rect x="12.3" y="5.8" width="4.5" height="4" fill="#a9c6f6" stroke="#2d4fa0" stroke-width=".8"/><rect x="12.3" y="12" width="4.5" height="4" fill="#a9c6f6" stroke="#2d4fa0" stroke-width=".8"/><path d="M8 10.5H10.3M10.3 7.8V14M10.3 7.8H12.3M10.3 14H12.3" stroke="#2d4fa0" stroke-width=".9" fill="none"/></svg>
<div class="t" style="left:133px;top:482px;font-size:16px;letter-spacing:0.324px;font-weight:500;">syspolicy_purge_history</div>
<svg style="left:80.5px;top:504px" width="22" height="23" viewBox="0 0 22 23"><defs><linearGradient id="g39" x1="0" y1="0" x2="0" y2="1"><stop offset="0" stop-color="#f8fbff"/><stop offset="1" stop-color="#b4c8e8"/></linearGradient></defs><rect x="9.5" y="2.5" width="11" height="19" fill="url(#g39)" stroke="#5a6a8a" stroke-width="1"/><path d="M9.5 21.6H20.5" stroke="#3a4a6a" stroke-width="1.4"/><rect x="11" y="5" width="6" height="2.2" fill="#3a9a3a"/><rect x="11" y="10" width="7" height="8" fill="#3a9a3a" stroke="#1f6f1f" stroke-width=".7"/><path d="M12.3 14 L14 15.8 L16.8 12" stroke="#e8ffe8" stroke-width="1.1" fill="none"/><path d="M10.5 3.5 Q4 3 4.5 10" stroke="#2f7f2f" stroke-width="2" fill="none"/><path d="M1 9.5 L4.6 5.5 L8 9.8 Z" fill="#2f7f2f"/></svg>
<div class="t" style="left:108px;top:508px;font-size:16px;letter-spacing:0.795px;font-weight:500;"><span style="font-size:0.94em">作业活动监视器</span></div>
<svg style="left:61px;top:536px" width="12" height="12" viewBox="0 0 12 12"><rect x="0.6" y="0.6" width="10.8" height="10.8" rx="1.3" fill="#fcfcfc" stroke="#909096" stroke-width="1.2"/><path d="M2.8 6H9.2" stroke="#2a3766" stroke-width="1.25"/><path d="M6 2.8V9.2" stroke="#2a3766" stroke-width="1.25"/></svg>
<svg style="left:80.5px;top:534px" width="20" height="16" viewBox="0 0 20 16"><defs><linearGradient id="g40" x1="0" y1="0" x2="1" y2=".6"><stop offset="0" stop-color="#fdf0b4"/><stop offset=".5" stop-color="#f3cf6a"/><stop offset="1" stop-color="#dea02e"/></linearGradient></defs><path d="M0.8 3.5 Q0.8 0.6 3 0.6 L8 0.6 L10 3.4 L0.8 3.4 Z" fill="#d9d2a4" stroke="#b7ad7c" stroke-width=".8"/><rect x="0.6" y="3.2" width="18.6" height="12.2" fill="url(#g40)" stroke="#c4a048" stroke-width=".8"/><path d="M0.6 15.6 H19.6 V4" stroke="#6a4a10" stroke-width="1.1" fill="none" opacity=".85"/></svg>
<div class="t" style="left:108px;top:534px;font-size:16px;letter-spacing:0.711px;font-weight:500;"><span style="font-size:0.94em">警报</span></div>
<svg style="left:61px;top:562px" width="12" height="12" viewBox="0 0 12 12"><rect x="0.6" y="0.6" width="10.8" height="10.8" rx="1.3" fill="#fcfcfc" stroke="#909096" stroke-width="1.2"/><path d="M2.8 6H9.2" stroke="#2a3766" stroke-width="1.25"/><path d="M6 2.8V9.2" stroke="#2a3766" stroke-width="1.25"/></svg>
<svg style="left:80.5px;top:560px" width="20" height="16" viewBox="0 0 20 16"><defs><linearGradient id="g41" x1="0" y1="0" x2="1" y2=".6"><stop offset="0" stop-color="#fdf0b4"/><stop offset=".5" stop-color="#f3cf6a"/><stop offset="1" stop-color="#dea02e"/></linearGradient></defs><path d="M0.8 3.5 Q0.8 0.6 3 0.6 L8 0.6 L10 3.4 L0.8 3.4 Z" fill="#d9d2a4" stroke="#b7ad7c" stroke-width=".8"/><rect x="0.6" y="3.2" width="18.6" height="12.2" fill="url(#g41)" stroke="#c4a048" stroke-width=".8"/><path d="M0.6 15.6 H19.6 V4" stroke="#6a4a10" stroke-width="1.1" fill="none" opacity=".85"/></svg>
<div class="t" style="left:108px;top:561px;font-size:16px;letter-spacing:0.564px;font-weight:500;"><span style="font-size:0.94em">操作员</span></div>
<svg style="left:61px;top:588px" width="12" height="12" viewBox="0 0 12 12"><rect x="0.6" y="0.6" width="10.8" height="10.8" rx="1.3" fill="#fcfcfc" stroke="#909096" stroke-width="1.2"/><path d="M2.8 6H9.2" stroke="#2a3766" stroke-width="1.25"/><path d="M6 2.8V9.2" stroke="#2a3766" stroke-width="1.25"/></svg>
<svg style="left:80.5px;top:586px" width="20" height="16" viewBox="0 0 20 16"><defs><linearGradient id="g42" x1="0" y1="0" x2="1" y2=".6"><stop offset="0" stop-color="#fdf0b4"/><stop offset=".5" stop-color="#f3cf6a"/><stop offset="1" stop-color="#dea02e"/></linearGradient></defs><path d="M0.8 3.5 Q0.8 0.6 3 0.6 L8 0.6 L10 3.4 L0.8 3.4 Z" fill="#d9d2a4" stroke="#b7ad7c" stroke-width=".8"/><rect x="0.6" y="3.2" width="18.6" height="12.2" fill="url(#g42)" stroke="#c4a048" stroke-width=".8"/><path d="M0.6 15.6 H19.6 V4" stroke="#6a4a10" stroke-width="1.1" fill="none" opacity=".85"/></svg>
<div class="t" style="left:108px;top:587px;font-size:16px;letter-spacing:0.711px;font-weight:500;"><span style="font-size:0.94em">代理</span></div>
<svg style="left:61px;top:614px" width="12" height="12" viewBox="0 0 12 12"><rect x="0.6" y="0.6" width="10.8" height="10.8" rx="1.3" fill="#fcfcfc" stroke="#909096" stroke-width="1.2"/><path d="M2.8 6H9.2" stroke="#2a3766" stroke-width="1.25"/><path d="M6 2.8V9.2" stroke="#2a3766" stroke-width="1.25"/></svg>
<svg style="left:80.5px;top:612px" width="20" height="16" viewBox="0 0 20 16"><defs><linearGradient id="g43" x1="0" y1="0" x2="1" y2=".6"><stop offset="0" stop-color="#fdf0b4"/><stop offset=".5" stop-color="#f3cf6a"/><stop offset="1" stop-color="#dea02e"/></linearGradient></defs><path d="M0.8 3.5 Q0.8 0.6 3 0.6 L8 0.6 L10 3.4 L0.8 3.4 Z" fill="#d9d2a4" stroke="#b7ad7c" stroke-width=".8"/><rect x="0.6" y="3.2" width="18.6" height="12.2" fill="url(#g43)" stroke="#c4a048" stroke-width=".8"/><path d="M0.6 15.6 H19.6 V4" stroke="#6a4a10" stroke-width="1.1" fill="none" opacity=".85"/></svg>
<div class="t" style="left:108px;top:613px;font-size:16px;letter-spacing:0.815px;font-weight:500;"><span style="font-size:0.94em">错误日志</span></div>
</div>
<div class="abs" style="left:93.5px;top:536.4px;width:272.4px;height:32.6px;background:transparent;border:3.5px solid #f24d5e;border-radius:5px"></div>
<div class="abs" style="left:4px;top:896px;width:373px;height:22px;background:#f0f0f0;"></div>
<div class="abs" style="left:28px;top:897px;width:229px;height:20px;background:#cdcdcd;"></div>
<svg style="left:12px;top:901px" width="9" height="12" viewBox="0 0 9 12"><path d="M8 1L2 6L8 11" stroke="#3c3c3c" stroke-width="2.7" fill="none"/></svg>
<svg style="left:360px;top:901px" width="9" height="12" viewBox="0 0 9 12"><path d="M1 1L7 6L1 11" stroke="#3c3c3c" stroke-width="2.7" fill="none"/></svg>
<div class="abs" style="left:4px;top:919px;width:374px;height:1px;background:#7a7a7a;"></div>
<div class="abs" style="left:375.5px;top:131px;width:2.5px;height:789px;background:#a9a9a9;"></div>
<div class="abs" style="left:378px;top:131px;width:5.3px;height:790px;background:#f7f7f7;"></div>
<div class="abs" style="left:383.3px;top:130.3px;width:960px;height:1.1px;background:#8e8e8e;"></div>
<div class="abs" style="left:383.3px;top:130.3px;width:1.1px;height:790px;background:#999999;"></div>
<div class="abs" style="left:384.4px;top:131.4px;width:1.2px;height:790px;background:#ffffff;"></div>
<div class="abs" style="left:385.6px;top:158.4px;width:1.1px;height:379px;background:#a0a0a0;"></div>
<div class="abs" style="left:385.6px;top:131.4px;width:958px;height:27px;background:#f2f2f2;"></div>
<svg style="left:386px;top:134px" width="680" height="25" viewBox="0 0 680 25"><defs><linearGradient id="g44" x1="0" y1="0" x2="0" y2="1"><stop offset="0" stop-color="#eeeeee"/><stop offset="1" stop-color="#bdbdbd"/></linearGradient></defs><path d="M1 24.5 L24 2.5 Q25.5 1 28 1 H338 Q343 1 345 4 L333 24.5 Z" fill="url(#g44)" stroke="#9a9a9a" stroke-width="1"/><path d="M331 24.5 L347 3 Q348.5 1 351 1 H674 Q677 1 677 4 V24.5 Z" fill="#fbfbfb" stroke="#8a8a8a" stroke-width="1"/><path d="M332 24.8 H676.5" stroke="#fbfbfb" stroke-width="1.5"/></svg>
<div class="t" style="left:419px;top:139px;font-size:16px;letter-spacing:0.396px;font-weight:500;">SQLQuery3.sql - (lo...dministrator (61))*</div>
<div class="t" style="left:740px;top:139px;font-size:16px;letter-spacing:0.476px;font-weight:bold;">SQLQuery2.sql - (lo...dministrator (64))*</div>
<svg style="left:1295px;top:141px" width="14" height="14" viewBox="0 0 14 14"><path d="M0 1.5H14" stroke="#000" stroke-width="3"/><path d="M0 5.5H14L7 13Z" fill="#000"/></svg>
<svg style="left:1323px;top:138px" width="15" height="15" viewBox="0 0 15 15"><path d="M1 1L14 14M14 1L1 14" stroke="#000" stroke-width="2.3"/></svg>
<div class="abs" style="left:385.6px;top:158px;width:958px;height:1px;background:#8e8e8e;"></div>
<div class="abs" style="left:719px;top:158px;width:344px;height:1px;background:#fbfbfb;"></div>
<div class="abs" style="left:388px;top:159px;width:936px;height:356px;background:#ffffff;"></div>
<div class="abs" style="left:386.7px;top:159px;width:21.3px;height:356px;background:#efefef;"></div>
<div class="abs" style="left:408px;top:159px;width:5px;height:179px;background:#f4e51c;"></div>
<svg style="left:410px;top:160px" width="16" height="172" viewBox="0 0 16 172"><path d="M6.5 16V139M6.5 33.5H14" stroke="#808080" stroke-width="1.2" fill="none"/><path d="M6.5 150V166.5H14" stroke="#808080" stroke-width="1.2" fill="none"/><rect x="1" y="5.5" width="11" height="11" fill="#fff" stroke="#808080" stroke-width="1.1"/><path d="M3.5 11H9.5" stroke="#333" stroke-width="1.2"/><rect x="1" y="139.5" width="11" height="11" fill="#fff" stroke="#808080" stroke-width="1.1"/><path d="M3.5 145H9.5" stroke="#333" stroke-width="1.2"/></svg>
<div class="abs" style="left:428px;top:226px;width:273px;height:22px;background:#b9c7d8;"></div>
<div class="t code" style="left:428px;top:159.6px;height:20px;line-height:20px;transform-origin:0 14.7px;transform:scaleY(.83)"><span class="kw">select</span> <span class="gr">*</span><span class="kw">from</span> <span class="id">hinosynt_item</span> <span class="kw">where</span> <span class="id">distir_no</span><span class="gr">=</span><span class="st">'260203200000250'</span></div>
<div class="t code" style="left:428px;top:181.9px;height:20px;line-height:20px;transform-origin:0 14.7px;transform:scaleY(.83)"><span class="gr">AND</span> <span class="fn">ISNULL</span><span class="gr">(</span><span class="id">box_no</span><span class="gr">,</span><span class="st">''</span><span class="gr">)=</span><span class="st">''</span></div>
<div class="t code" style="left:428px;top:226.4px;height:20px;line-height:20px;transform-origin:0 14.7px;transform:scaleY(.83)"><span class="bk">EXEC p_hino_boxnotohydeeh2</span></div>
<div class="t code" style="left:428px;top:293.2px;height:20px;line-height:20px;transform-origin:0 14.7px;transform:scaleY(.83)"><span class="kw">select</span> <span class="gr">*</span> <span class="kw">from</span> <span class="kw">openquery</span><span class="gr">(</span><span class="id">HYDEELINK2</span><span class="gr">,</span><span class="st">'select * from</span></div>
<div class="t code" style="left:428px;top:315.5px;height:20px;line-height:20px;transform-origin:0 14.7px;transform:scaleY(.83)">                                <span class="st">h2.t_dist_h  where DISTNO=''260203200000250'''</span><span class="gr">)</span></div>
<div class="abs" style="left:402px;top:204.4px;width:320px;height:58.6px;background:transparent;border:3.5px solid #f24d5e;border-radius:5px"></div>
<div class="abs" style="left:1324px;top:159px;width:19px;height:356px;background:#f0f0f0;"></div>
<div class="abs" style="left:1324px;top:159px;width:19px;height:14px;background:#f4f4f4;border:1px solid #e2e2e2;border-bottom:2px solid #6a6a6a"></div>
<div class="abs" style="left:1324px;top:196px;width:19px;height:201px;background:#cdcdcd;"></div>
<svg style="left:1328px;top:181px" width="12" height="9" viewBox="0 0 12 9"><path d="M1 8L6 2L11 8" stroke="#484848" stroke-width="2.7" fill="none"/></svg>
<svg style="left:1328px;top:499px" width="12" height="9" viewBox="0 0 12 9"><path d="M1 1L6 7L11 1" stroke="#484848" stroke-width="2.7" fill="none"/></svg>
<div class="abs" style="left:388px;top:515px;width:955px;height:21px;background:#f0f0f0;"></div>
<div class="abs" style="left:409px;top:516px;width:789px;height:19px;background:#cdcdcd;"></div>
<svg style="left:393px;top:519px" width="9" height="12" viewBox="0 0 9 12"><path d="M8 1L2 6L8 11" stroke="#3c3c3c" stroke-width="2.7" fill="none"/></svg>
<svg style="left:1308px;top:519px" width="9" height="12" viewBox="0 0 9 12"><path d="M1 1L7 6L1 11" stroke="#3c3c3c" stroke-width="2.7" fill="none"/></svg>
<div class="abs" style="left:384px;top:536px;width:959px;height:1.6px;background:#a6a6a6;"></div>
<div class="abs" style="left:388px;top:538px;width:955px;height:348px;background:#f0f0f0;"></div>
<div class="abs" style="left:466px;top:546px;width:72px;height:26px;background:#f1f1f1;border:1px solid #d4d4d4;border-bottom:none"></div>
<div class="abs" style="left:387px;top:544px;width:79px;height:29px;background:#fdfdfd;border:1px solid #dadada;border-bottom:none"></div>
<svg style="left:397px;top:548px" width="19" height="17" viewBox="0 0 19 17"><rect x="0.5" y="0.5" width="17.5" height="15.5" fill="#f4f6ff" stroke="#5a6aa0"/><rect x="1" y="1" width="16.5" height="3" fill="#5f86d6"/><path d="M1 8H17.5M1 12H17.5M6.3 4V16M12 4V16" stroke="#aab6e2" stroke-width="1"/><path d="M0.5 16.3H18.3V1" stroke="#4a4a5a" stroke-width="1.2" fill="none"/></svg>
<div class="t" style="left:424.5px;top:550.5px;font-size:15.5px;letter-spacing:-0.008px;font-weight:normal;">结果</div>
<svg style="left:474px;top:548px" width="18" height="21" viewBox="0 0 18 21"><defs><linearGradient id="g45" x1="0" y1="0" x2="0" y2="1"><stop offset="0" stop-color="#e4eefc"/><stop offset="1" stop-color="#7aa6e2"/></linearGradient></defs><path d="M0.5 0.5H6.5V19H0.5Z" fill="url(#g45)" stroke="#5a78b0" stroke-width=".9"/><path d="M1.5 4.5H5.5M1.5 8H5.5" stroke="#f4f8ff" stroke-width="1.2"/><path d="M8.5 7.5H13.5L17.5 11.5V20.5H8.5Z" fill="#fdfdfd" stroke="#55608a" stroke-width="1"/><path d="M13.5 7.5V11.5H17.5Z" fill="#5a6a9a"/><path d="M10 11.5H12.5M10 14H15.5M10 16.5H15.5M10 18.8H15.5" stroke="#e06a50" stroke-width="1.1"/></svg>
<div class="t" style="left:501px;top:553px;font-size:15.5px;letter-spacing:-0.008px;font-weight:normal;">消息</div>
<div class="abs" style="left:391px;top:573px;width:950px;height:309px;background:#ffffff;border:1px solid #a6a6a6"></div>
<div class="abs" style="left:392px;top:598px;width:948px;height:1px;background:#ebebeb;"></div>
<div class="abs" style="left:392px;top:623px;width:948px;height:1px;background:#ededed;"></div>
<div class="abs" style="left:433px;top:574px;width:1px;height:50px;background:#ebebeb;"></div>
<div class="abs" style="left:480px;top:574px;width:1px;height:50px;background:#ebebeb;"></div>
<div class="abs" style="left:786px;top:574px;width:1px;height:50px;background:#ebebeb;"></div>
<div class="abs" style="left:895px;top:574px;width:1px;height:50px;background:#ebebeb;"></div>
<div class="abs" style="left:1104px;top:574px;width:1px;height:50px;background:#ebebeb;"></div>
<div class="abs" style="left:1178px;top:574px;width:1px;height:50px;background:#ebebeb;"></div>
<div class="t" style="left:436px;top:578px;font-size:16.5px;transform-origin:0 50%;transform:scaleX(0.8576);font-weight:normal;">DRID</div>
<div class="t" style="left:488px;top:578px;font-size:16.5px;transform-origin:0 50%;transform:scaleX(0.8427);font-weight:normal;">NOTES</div>
<div class="t" style="left:793px;top:578px;font-size:16.5px;transform-origin:0 50%;transform:scaleX(0.8441);font-weight:normal;">LASTMODIFY</div>
<div class="t" style="left:902.4px;top:578px;font-size:16.5px;transform-origin:0 50%;transform:scaleX(0.8465);font-weight:normal;">LASTTIME</div>
<div class="t" style="left:1113px;top:578px;font-size:16.5px;transform-origin:0 50%;transform:scaleX(0.8908);font-weight:normal;">STATUS</div>
<div class="t" style="left:1186.6px;top:578px;font-size:16.5px;transform-origin:0 50%;transform:scaleX(0.8368);font-weight:normal;">EXECDATE</div>
<div class="t" style="left:401px;top:603px;font-size:16.5px;transform-origin:0 50%;transform:scaleX(0.7619);font-weight:normal;">1</div>
<div class="t" style="left:434.5px;top:603px;font-size:16.5px;transform-origin:0 50%;transform:scaleX(0.8443);font-weight:normal;">0106</div>
<div class="t" style="left:491px;top:602.5px;font-size:16px;letter-spacing:-0.379px;font-weight:normal;">由源单号</div>
<div class="t" style="left:554px;top:603px;font-size:16.5px;transform-origin:0 50%;transform:scaleX(0.8581);font-weight:normal;">[260202017000889]</div>
<div class="t" style="left:680px;top:602.5px;font-size:16px;letter-spacing:-0.419px;font-weight:normal;">分单生成单据</div>
<div class="t" style="left:796px;top:603px;font-size:16.5px;transform-origin:0 50%;transform:scaleX(0.8411);font-weight:normal;">60027</div>
<div class="t" style="left:905.3px;top:603px;font-size:16.5px;transform-origin:0 50%;transform:scaleX(0.8568);font-weight:normal;">2026-02-03 11:37:32.0000000</div>
<div class="t" style="left:1116px;top:603px;font-size:16.5px;transform-origin:0 50%;transform:scaleX(0.7619);font-weight:normal;">1</div>
<div class="abs" style="left:1188px;top:599px;width:151px;height:24px;overflow:hidden"><div class="t" style="left:1.5px;top:4px;font-size:16.5px;transform-origin:0 50%;transform:scaleX(0.8281);font-weight:normal;">2026-02-04 11:01:03.0000000</div></div>
<div class="abs" style="left:392px;top:860px;width:948px;height:21px;background:#f0f0f0;"></div>
<div class="abs" style="left:503px;top:861px;width:114px;height:19px;background:#cdcdcd;"></div>
<svg style="left:398px;top:864px" width="9" height="12" viewBox="0 0 9 12"><path d="M8 1L2 6L8 11" stroke="#3c3c3c" stroke-width="2.7" fill="none"/></svg>
<svg style="left:1325px;top:864px" width="9" height="12" viewBox="0 0 9 12"><path d="M1 1L7 6L1 11" stroke="#3c3c3c" stroke-width="2.7" fill="none"/></svg>
<div class="abs" style="left:386.5px;top:886.2px;width:957px;height:32.6px;background:#f3e08b;"></div>
<div class="abs" style="left:383.3px;top:918.8px;width:960px;height:1.1px;background:#8e8e8e;"></div>
<svg style="left:390px;top:893px" width="20" height="20" viewBox="0 0 20 20"><defs><radialGradient id="g46" cx=".4" cy=".3" r=".8"><stop offset="0" stop-color="#6cc46a"/><stop offset="1" stop-color="#277a27"/></radialGradient></defs><circle cx="10" cy="10" r="9.5" fill="url(#g46)" stroke="#2a6a2a" stroke-width=".8"/><path d="M5 10.5L8.8 14.2L15.5 6" stroke="#fff" stroke-width="2.6" fill="none" stroke-linecap="round"/></svg>
<div class="t" style="left:415px;top:895px;font-size:16px;letter-spacing:0.717px;font-weight:500;"><span style="font-size:0.94em">查询已成功执行。</span></div>
<div class="abs" style="left:748px;top:890px;width:1px;height:25px;background:#9a8a4a;"></div>
<div class="abs" style="left:910px;top:890px;width:1px;height:25px;background:#9a8a4a;"></div>
<div class="abs" style="left:1147px;top:890px;width:1px;height:25px;background:#9a8a4a;"></div>
<div class="abs" style="left:1201px;top:890px;width:1px;height:25px;background:#9a8a4a;"></div>
<div class="abs" style="left:1282px;top:890px;width:1px;height:25px;background:#9a8a4a;"></div>
<div class="t" style="left:758px;top:895px;font-size:16px;letter-spacing:0.252px;font-weight:500;">(local) (10.50 RTM)</div>
<div class="t" style="left:919px;top:895px;font-size:16px;letter-spacing:0.468px;font-weight:500;">CHINAMI-A5F59NT\Admini</div>
<div class="t" style="left:1156px;top:895px;font-size:16px;letter-spacing:0.023px;font-weight:500;">Hino</div>
<div class="t" style="left:1210px;top:895px;font-size:16px;letter-spacing:-0.035px;font-weight:500;">00:00:00</div>
<div class="t" style="left:1291px;top:895px;font-size:16px;letter-spacing:0.536px;font-weight:500;">1 <span style="font-size:0.94em">行</span></div>
<div class="abs" style="left:1317.5px;top:662.8px;width:41.8px;height:41.8px;border-radius:50%;background:linear-gradient(90deg,#6ba7ff,#3f86f3 70%)"></div>
<svg style="left:1330px;top:675px" width="12" height="20" viewBox="0 0 12 20"><path d="M9.3 3L3.2 10L9.3 17.2" stroke="#fff" stroke-width="2.8" fill="none" stroke-linecap="square"/></svg>
<div class="abs" style="left:1101px;top:905px;width:245px;height:40px;border-radius:13px;background:#fff;box-shadow:0 0 5px rgba(0,0,0,.3)"></div>
<div class="abs" style="left:1101px;top:905px;width:56px;height:40px;border-radius:13px 0 0 13px;background:#fbfbfb"></div>
<svg style="left:1110px;top:908px" width="40" height="20" viewBox="0 0 40 20"><path d="M2 8 Q1.5 5 4.5 4 L27 0.6 Q30.5 0 31.5 3 L36 16 H4 Z" fill="#f4682a"/><path d="M11 17 Q9 11 17 11 H32" stroke="#fff" stroke-width="3" fill="none"/></svg>
<div class="abs" style="left:1157px;top:909px;width:1px;height:15px;background:#e9e9e9;"></div>
<div class="t" style="left:1168px;top:917px;font-size:20px;color:#1a74d4;font-weight:bold">英</div>
<svg style="left:1200px;top:916px" width="140" height="8" viewBox="0 0 140 8"><circle cx="9.5" cy="6.5" r="2.2" fill="#1a74d4"/><rect x="45.5" y="0.5" width="7" height="10" rx="3.5" fill="#1a74d4"/><path d="M75 5H95M75 4V9M95 4V9M80 5V8M85 5V8M90 5V8" stroke="#1a74d4" stroke-width="2.2"/><path d="M112 8 Q112 3 117 3 H124 Q129 3 129 8" stroke="#1a74d4" stroke-width="2.6" fill="none"/></svg>
<div class="abs" style="left:0px;top:0px;width:3.4px;height:924px;background:#000;"></div>

</body>
</html>
